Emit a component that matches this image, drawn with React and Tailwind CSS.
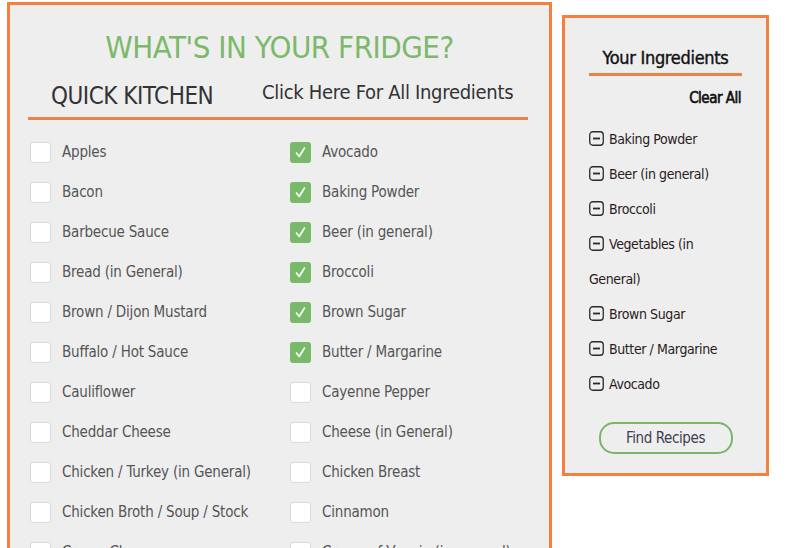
import React from "react";

const leftItems = [
  ["Apples", false],
  ["Bacon", false],
  ["Barbecue Sauce", false],
  ["Bread (in General)", false],
  ["Brown / Dijon Mustard", false],
  ["Buffalo / Hot Sauce", false],
  ["Cauliflower", false],
  ["Cheddar Cheese", false],
  ["Chicken / Turkey (in General)", false],
  ["Chicken Broth / Soup / Stock", false],
  ["Cream Cheese", false],
];

const rightItems = [
  ["Avocado", true],
  ["Baking Powder", true],
  ["Beer (in general)", true],
  ["Broccoli", true],
  ["Brown Sugar", true],
  ["Butter / Margarine", true],
  ["Cayenne Pepper", false],
  ["Cheese (in General)", false],
  ["Chicken Breast", false],
  ["Cinnamon", false],
  ["Cream of Veggie (in general)", false],
];

const selected = [
  "Baking Powder",
  "Beer (in general)",
  "Broccoli",
  "Vegetables (in\nGeneral)",
  "Brown Sugar",
  "Butter / Margarine",
  "Avocado",
];

const Checkbox = ({ checked }) =>
  checked ? (
    <span className="w-[21px] h-[21px] rounded-[3px] bg-[#79b96a] flex items-center justify-center shrink-0">
      <svg width="21" height="21" viewBox="0 0 21 21">
        <path
          d="M6.5 11 L9.2 14.5 L14.5 6"
          fill="none"
          stroke="#fff"
          strokeWidth="1.6"
          strokeLinecap="round"
          strokeLinejoin="round"
        />
      </svg>
    </span>
  ) : (
    <span className="w-[21px] h-[21px] rounded-[3px] bg-white border border-[#dadada] shrink-0" />
  );

const MinusIcon = () => (
  <svg
    width="15"
    height="15"
    viewBox="0 0 15 15"
    className="inline-block align-[-2px] mr-[5px]"
  >
    <rect
      x="0.75"
      y="0.75"
      width="13.5"
      height="13.5"
      rx="3"
      fill="none"
      stroke="#2a2a2a"
      strokeWidth="1.3"
    />
    <rect x="4" y="6.6" width="7" height="1.8" fill="#2a2a2a" />
  </svg>
);

const App = () => {
  const rows = leftItems.map((item, i) => [item, rightItems[i]]);

  return (
    <div className="h-[548px] overflow-hidden bg-white [font-family:'DejaVu_Sans_Condensed','Liberation_Sans_Narrow','Liberation_Sans',sans-serif]">
      <div className="flex items-start">
        {/* Ingredient picker */}
        <div className="ml-[7px] mt-[2px] w-[545px] border-[3px] border-[#f57f3d] bg-[#eeeeee] pb-10">
          <h1 className="pt-[25px] text-center text-[31px] leading-[34px] tracking-[-0.5px] text-[#7cb96b]">
            WHAT'S IN YOUR FRIDGE?
          </h1>
          <div className="flex items-center h-[30px] mt-[16px] whitespace-nowrap">
            <span className="ml-[41px] w-[211px] text-[24px] tracking-[-0.5px] text-[#333] mt-[2px]">
              QUICK KITCHEN
            </span>
            <span className="text-[20px] tracking-[-0.3px] text-[#333] -mt-[7px]">
              Click Here For All Ingredients
            </span>
          </div>
          <div className="ml-[18px] w-[500px] h-[3px] bg-[#e9834b] mt-[7px]" />

          <div className="mt-[12px] ml-[20px]">
            {rows.map(([a, b]) => (
              <div key={a[0]} className="flex h-10 items-center">
                <div className="w-[260px] flex items-center">
                  <Checkbox checked={a[1]} />
                  <span className="ml-[11px] text-[15px] tracking-[-0.2px] text-[#555] whitespace-nowrap">
                    {a[0]}
                  </span>
                </div>
                <div className="flex items-center">
                  <Checkbox checked={b[1]} />
                  <span className="ml-[11px] text-[15px] tracking-[-0.2px] text-[#555] whitespace-nowrap">
                    {b[0]}
                  </span>
                </div>
              </div>
            ))}
          </div>
        </div>

        {/* Selected ingredients */}
        <div className="ml-[10px] mt-[15px] w-[207px] h-[461px] border-[3px] border-[#f57f3d] bg-[#eeeeee]">
          <h2 className="pt-[26px] text-center text-[18px] leading-[28px] tracking-[-0.3px] text-[#111] [-webkit-text-stroke:0.4px_#111]">
            Your Ingredients
          </h2>
          <div className="ml-[24px] w-[153px] h-[3px] bg-[#e9834b] mt-[1px]" />
          <div className="mt-[12px] pr-[25px] text-right text-[15px] leading-[20px] tracking-[-0.5px] text-[#111] [-webkit-text-stroke:0.6px_#111]">
            Clear All
          </div>
          <ul className="mt-[14px] ml-[24px] text-[14px] leading-[35px] tracking-[-0.4px] text-[#2a1c1c]">
            {selected.map((name) => {
              const [first, second] = name.split("\n");
              return (
                <li key={name}>
                  <MinusIcon />
                  {first}
                  {second && (
                    <>
                      <br />
                      {second}
                    </>
                  )}
                </li>
              );
            })}
          </ul>
          <button className="block mx-auto mt-[20px] w-[134px] h-[32px] rounded-[15px] border-2 border-[#7ab56c] text-[15px] tracking-[-0.4px] text-[#3b4150]">
            Find Recipes
          </button>
        </div>
      </div>
    </div>
  );
};

export default App;
